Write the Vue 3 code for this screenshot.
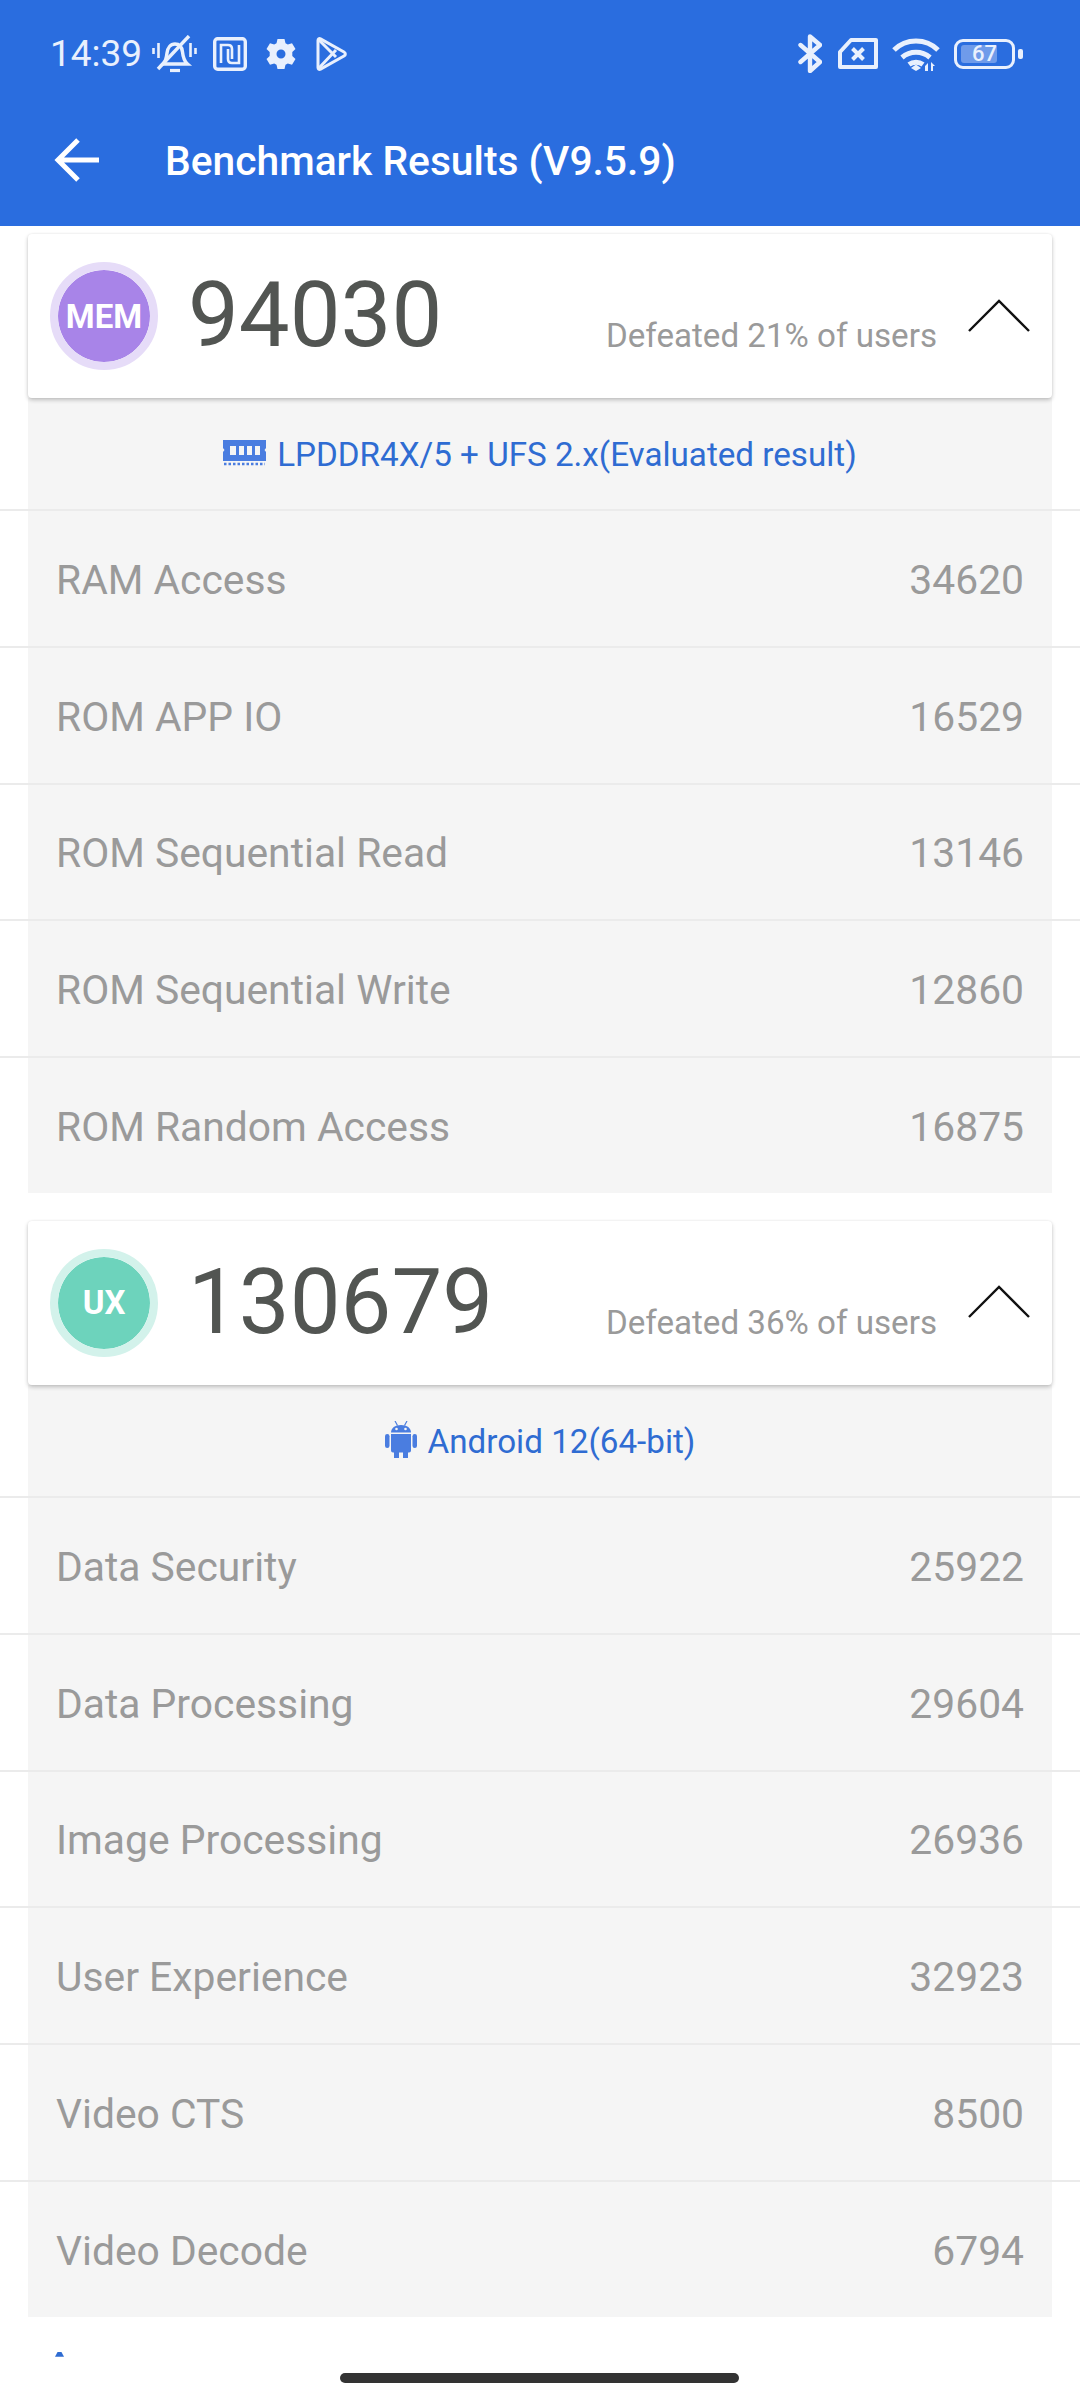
<script setup>
const sections = [
  {
    badge: 'MEM', badgeClass: 'mem', score: '94030', pct: 'Defeated 21% of users', kind: 'ram',
    info: 'LPDDR4X/5 + UFS 2.x(Evaluated result)',
    rows: [
      ['RAM Access', '34620'], ['ROM APP IO', '16529'], ['ROM Sequential Read', '13146'],
      ['ROM Sequential Write', '12860'], ['ROM Random Access', '16875'],
    ],
  },
  {
    badge: 'UX', badgeClass: 'ux', score: '130679', pct: 'Defeated 36% of users', kind: 'android',
    info: 'Android 12(64-bit)',
    rows: [
      ['Data Security', '25922'], ['Data Processing', '29604'], ['Image Processing', '26936'],
      ['User Experience', '32923'], ['Video CTS', '8500'], ['Video Decode', '6794'],
    ],
  },
]
</script>

<template>
  <div class="page">
    <header class="appbar">
      <div class="status">
        <div class="status-left">
          <span class="time">14:39</span>
          <svg class="i-bell" viewBox="0 0 45 38" fill="none" stroke="currentColor">
            <path d="M11 29c3-3 3.500-6 4-11 .6-5 3.500-9 8-9 4.500 0 7 3.500 7.500 8 .5 5 1.500 9 5 12z" stroke-width="3.400"/>
            <path d="M6 34 37 1" stroke-width="3.400" />
            <path d="M18 35.500h10" stroke-width="3.200"/>
            <path d="M1.500 13v6M6.500 8v15M38.500 8v14M43.500 13v6" stroke-width="2.600"/>
          </svg>
          <svg class="i-nfc" viewBox="0 0 34 34" fill="none" stroke="currentColor">
            <rect x="1.700" y="1.700" width="30.600" height="30.600" rx="3" stroke-width="3.400"/>
            <path d="M8 26V8h7c3 0 4 2 4 4v10M26 8v18h-7c-3 0-4-2-4-4V12" stroke-width="2.600"/>
          </svg>
          <svg class="i-gear" viewBox="0 0 30 30">
            <path fill="currentColor" fill-rule="evenodd" d="M11.500 0h7l1 4.300 2.300 1.300 4.200-1.300 3.500 5.700-3.200 3.100v3.800l3.200 3.100-3.500 5.700-4.200-1.300-2.300 1.300-1 4.300h-7l-1-4.300-2.300-1.300-4.200 1.300L.5 20l3.200-3.100v-3.800L.5 10 4 4.300l4.200 1.300 2.300-1.300zM15 10.500a4.500 4.500 0 1 0 0 9 4.500 4.500 0 0 0 0-9z"/>
          </svg>
          <svg class="i-play" viewBox="0 0 31 34" fill="none" stroke="currentColor" stroke-width="3" stroke-linejoin="round">
            <path d="M2 3.500c0-1.500 1.200-2.300 2.500-1.600L28 15c1.800 1 1.800 3 0 4L4.500 32.100C3.200 32.800 2 32 2 30.500z"/>
            <path d="M3 3l17 17M3 31l17-18"/>
          </svg>
        </div>
        <div class="status-right">
          <svg class="i-bt" viewBox="0 0 24 39" fill="none" stroke="currentColor" stroke-width="4.400" stroke-linecap="round" stroke-linejoin="round">
            <path d="M2.500 11 22 28l-10 9V2.500L22 11 2.500 28"/>
          </svg>
          <svg class="i-sim" viewBox="0 0 40 31" fill="none" stroke="currentColor">
            <path d="M2 29V14L13 2h25v27z" stroke-width="4" stroke-linejoin="round"/>
            <path d="M14.500 10.500l11 11M25.500 10.500l-11 11" stroke-width="4"/>
          </svg>
          <svg class="i-wifi" viewBox="0 0 48 34" fill="none" stroke="currentColor" stroke-width="5">
            <path d="M2 13C14 1 34 1 46 13M10 20.500c8-7 20-7 28 0M17 27.500c4-3 10-3 14 0"/>
            <path d="M19 31l5-3.500 5 3.500-5 3z" fill="currentColor" stroke="none"/>
            <path d="M33 34v-5l3-3v8zM39 34v-9l4 4h-2v5z" fill="currentColor" stroke="none"/>
          </svg>
          <div class="battery">
            <div class="battery-body">
              <div class="battery-fill"></div>
              <span class="battery-num">67</span>
            </div>
            <div class="battery-tip"></div>
          </div>
        </div>
      </div>
      <div class="titlebar">
        <svg class="i-back" viewBox="0 0 46 46" fill="none" stroke="currentColor" stroke-width="5">
          <path d="M45 23H4M24 3 4 23l20 20"/>
        </svg>
        <h1 class="title">Benchmark Results (V9.5.9)</h1>
      </div>
    </header>

    <main class="content">
      <section v-for="s in sections" :key="s.badge" class="section">
        <div class="card">
          <div class="badge" :class="s.badgeClass"><span>{{ s.badge }}</span></div>
          <div class="score">{{ s.score }}</div>
          <div class="pct">{{ s.pct }}</div>
          <svg class="chevron" viewBox="0 0 62 33" fill="none" stroke="#111" stroke-width="2.400">
            <path d="M1 32 31 2l30 30"/>
          </svg>
        </div>
        <div class="info">
          <svg v-if="s.kind === 'ram'" class="i-ram" viewBox="0 0 43 26">
            <path fill="#4a7de0" fill-rule="evenodd" d="M0 0h43v8l-1.500 2 1.500 2v9H0v-9l1.500-2L0 8zM7 6v9h6V6zM16 6v9h5V6zM24 6v9h5V6zM32 6v9h5V6z"/>
            <path fill="none" stroke="#4a7de0" stroke-width="2.500" stroke-dasharray="2.500 2" d="M1 24h41"/>
          </svg>
          <svg v-else class="i-android" viewBox="0 0 32 37">
            <g fill="#4a7de0">
              <rect x="0" y="13" width="4.500" height="14" rx="2.200"/>
              <rect x="27.500" y="13" width="4.500" height="14" rx="2.200"/>
              <path d="M6 13h20v16.500a2 2 0 0 1-2 2h-1V37h-5v-5.500h-4V37H9v-5.500H8a2 2 0 0 1-2-2z"/>
              <path d="M6 11.500C6 7 10 4 16 4s10 3 10 7.500z"/>
            </g>
            <path stroke="#4a7de0" stroke-width="1.200" d="M10 0l2.500 4.500M22 0l-2.500 4.500"/>
            <circle cx="11.500" cy="8" r="1.300" fill="#f5f5f5"/>
            <circle cx="20.500" cy="8" r="1.300" fill="#f5f5f5"/>
          </svg>
          <span>{{ s.info }}</span>
        </div>
        <div v-for="r in s.rows" :key="r[0]" class="row">
          <div class="row-inner">
            <span class="label">{{ r[0] }}</span>
            <span class="value">{{ r[1] }}</span>
          </div>
        </div>
      </section>
      <div class="next-peek"></div>
    </main>

    <div class="home-bar"></div>
  </div>
</template>

<style scoped>
.page {
  position: relative;
  width: 1080px;
  height: 2400px;
  overflow: hidden;
  background: #fff;
  font-family: Roboto, "Liberation Sans", sans-serif;
}
.appbar {
  height: 226px;
  background: #2a6ddf;
  color: #fff;
}
.status {
  height: 106px;
  display: flex;
  justify-content: space-between;
  align-items: center;
  padding: 1px 57px 0 50px;
  box-sizing: border-box;
  color: #e9f0fd;
}
.status-left, .status-right {
  display: flex;
  align-items: center;
}
.time { font-size: 37px; line-height: 1; width: 102px; }
.status svg { display: block; flex: none; }
.i-bell { width: 45px; height: 38px; margin-right: 16px; }
.i-nfc { width: 34px; height: 34px; margin-right: 19px; }
.i-gear { width: 30px; height: 30px; margin-right: 20px; }
.i-play { width: 31px; height: 34px; }
.i-bt { width: 24px; height: 39px; margin-right: 16px; }
.i-sim { width: 40px; height: 31px; margin-right: 14px; }
.i-wifi { width: 48px; height: 34px; margin-right: 14px; }
.battery { display: flex; align-items: center; gap: 3px; }
.battery-body {
  position: relative;
  width: 61px;
  height: 30px;
  box-sizing: border-box;
  border: 3px solid #e9f0fd;
  border-radius: 9px;
  display: flex;
  align-items: center;
  justify-content: center;
}
.battery-fill {
  position: absolute;
  left: 4px; top: 3px; bottom: 3px;
  width: 36px;
  border-radius: 3px;
  background: #6f9bea;
}
.battery-num { position: relative; font-size: 22px; font-weight: 500; line-height: 1; }
.battery-tip { width: 5px; height: 10px; border-radius: 2px; background: #e9f0fd; }

.titlebar {
  display: flex;
  align-items: center;
  height: 52px;
  padding: 0 0 0 54px;
  margin-top: 29px;
}
.i-back { width: 46px; height: 46px; margin-right: 65px; flex: none; margin-top: -3px; }
.title { margin: 0; font-size: 40.750px; font-weight: 500; line-height: 52px; white-space: nowrap; }

.content { padding-top: 8px; }
.section { margin-bottom: 28px; }
.card {
  position: relative;
  z-index: 1;
  margin: 0 28px;
  height: 164px;
  display: flex;
  align-items: center;
  background: #fff;
  border-radius: 4px;
  box-shadow: 0 2px 4px rgba(0,0,0,.22), 0 0 2px rgba(0,0,0,.08);
  padding: 0 22px 0 22px;
}
.badge {
  width: 92px; height: 92px;
  border-radius: 50%;
  border: 8px solid;
  background-clip: padding-box;
  color: #fff;
  display: flex; align-items: center; justify-content: center;
  font-size: 33px; font-weight: 700;
  flex: none;
}
.mem { background-color: #a884e8; border-color: #e6dcf8; }
.ux { background-color: #6dd3bc; border-color: #d3f2eb; }
.score { margin-left: 30px; font-size: 90.500px; line-height: 1; color: #525552; margin-top: -1px; }
.pct { margin-left: auto; margin-top: 40px; font-size: 33.150px; line-height: 1; color: #9a9a9a; }
.chevron { width: 62px; height: 33px; margin-left: 31px; margin-top: -2px; flex: none; }
.info {
  margin: 0 28px;
  height: 111px;
  padding-top: 2px;
  box-sizing: border-box;
  background: #f5f5f5;
  display: flex; align-items: center; justify-content: center; gap: 11px;
  color: #2f6cd2;
  font-size: 33.200px;
}
.i-ram { width: 43px; height: 26px; flex: none; margin-top: -3px; }
.i-android { width: 32px; height: 37px; flex: none; margin-top: -3px; }
.row {
  border-top: 2px solid #ebebeb;
}
.row-inner {
  margin: 0 28px;
  height: 134.800px;
  padding: 3px 28px 0;
  box-sizing: border-box;
  display: flex; align-items: center; justify-content: space-between;
  background: #f5f5f5;
  color: #9a9a9a;
  font-size: 40.800px;
}
.next-peek {
  width: 9px; height: 5px;
  margin: 35px 0 0 55px;
  background: #2f6cd2;
  clip-path: polygon(30% 0, 70% 0, 100% 100%, 0 100%);
}
.home-bar {
  position: absolute;
  left: 340px; top: 2373px;
  width: 399px; height: 10px;
  border-radius: 5px;
  background: #333;
}
</style>
